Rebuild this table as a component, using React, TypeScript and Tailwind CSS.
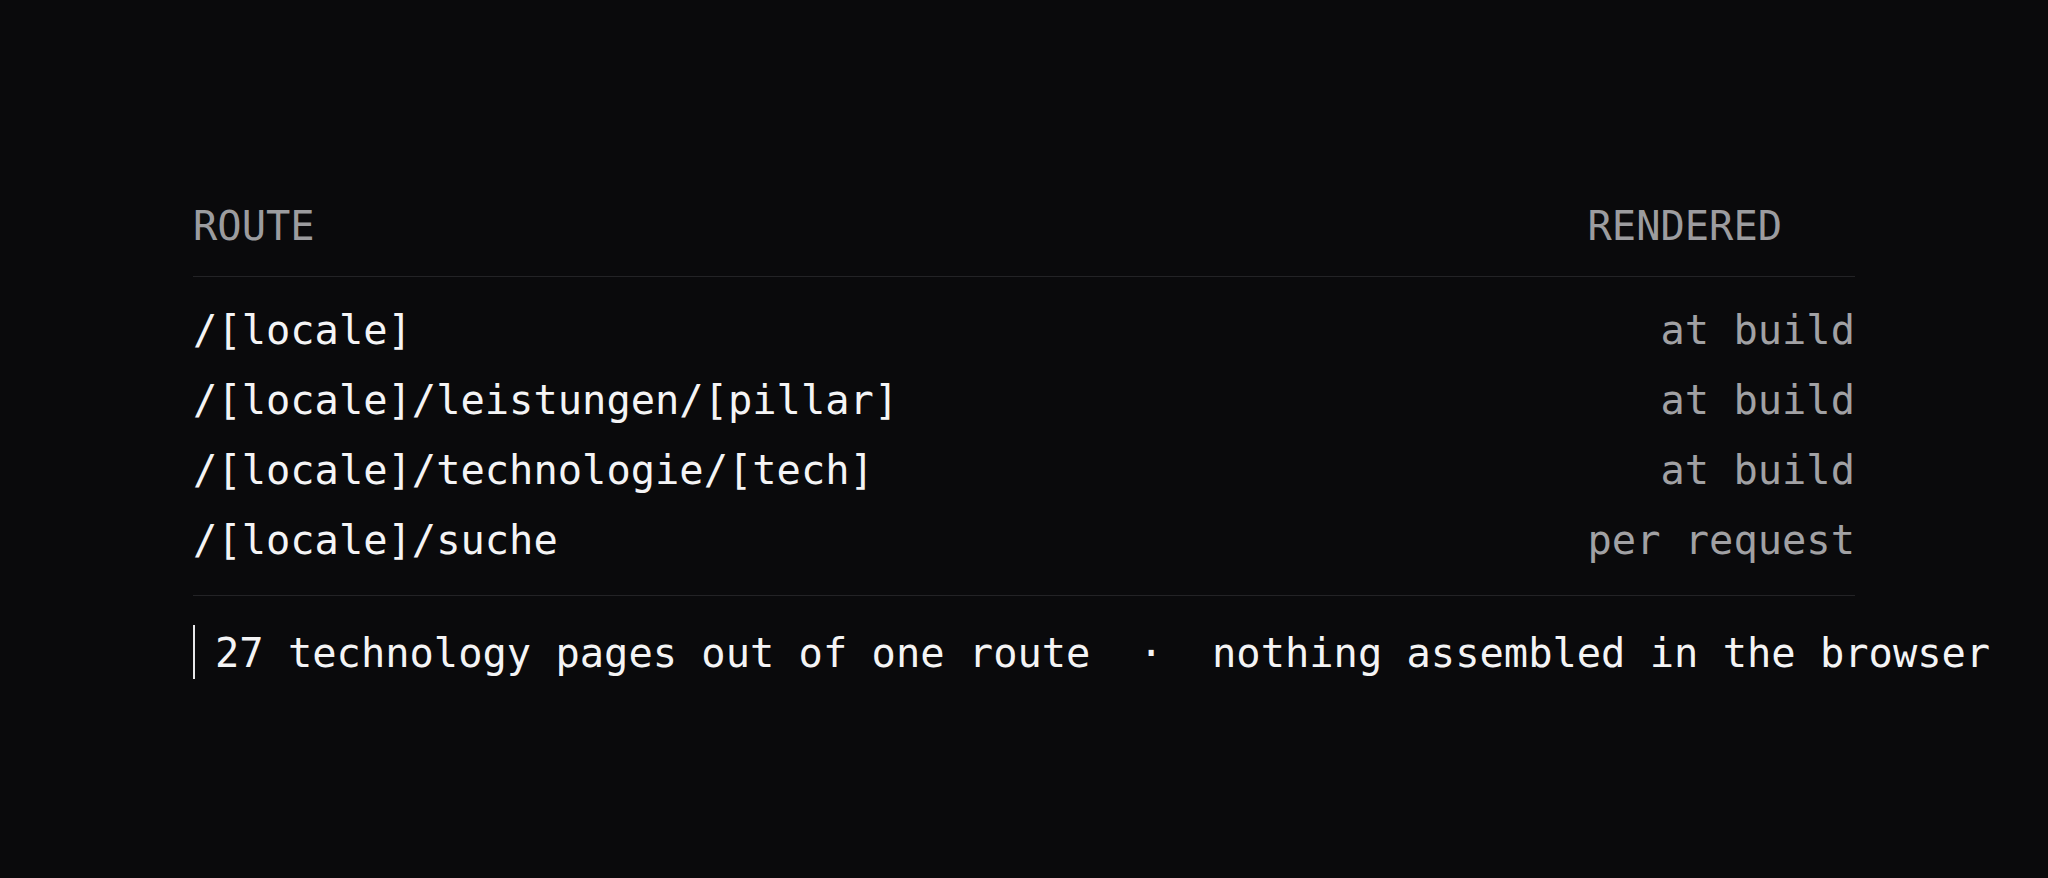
import React from "react";

const rows: { route: string; when: string }[] = [
  { route: "/[locale]", when: "at build" },
  { route: "/[locale]/leistungen/[pillar]", when: "at build" },
  { route: "/[locale]/technologie/[tech]", when: "at build" },
  { route: "/[locale]/suche", when: "per request" },
];

export default function App() {
  return (
    <div
      className="min-h-screen w-full bg-[#0a0a0c] flex items-center justify-center overflow-hidden text-[40.4px]"
      style={{ fontFamily: '"DejaVu Sans Mono", "Liberation Mono", monospace' }}
    >
      <div className="w-[1662px]">
        <table className="w-full border-collapse">
          <thead>
            <tr className="border-b border-[#232326]">
              <th className="text-left font-normal text-[#9c9c9f] leading-[52px] pt-[1px] pb-[24px]">
                ROUTE
              </th>
              <th className="w-px whitespace-nowrap text-left font-normal text-[#9c9c9f] leading-[52px] pt-[1px] pb-[24px]">
                RENDERED
              </th>
            </tr>
          </thead>
          <tbody className="border-b border-[#232326]">
            {rows.map((r, i) => (
              <tr key={r.route}>
                <td
                  className={`text-[#f4f4f5] leading-[70px] whitespace-nowrap ${
                    i === 0 ? "pt-[18px]" : ""
                  } ${i === rows.length - 1 ? "pb-[20px]" : ""}`}
                >
                  {r.route}
                </td>
                <td
                  className={`text-right text-[#a1a1a4] leading-[70px] whitespace-nowrap ${
                    i === 0 ? "pt-[18px]" : ""
                  } ${i === rows.length - 1 ? "pb-[20px]" : ""}`}
                >
                  {r.when}
                </td>
              </tr>
            ))}
          </tbody>
        </table>
        <div className="mt-[29px] border-l-2 border-[#e8e8ea] pl-[20px] pt-[2px] leading-[52px] whitespace-pre text-[#f4f4f5]">
          {"27 technology pages out of one route  ·  nothing assembled in the browser"}
        </div>
      </div>
    </div>
  );
}
